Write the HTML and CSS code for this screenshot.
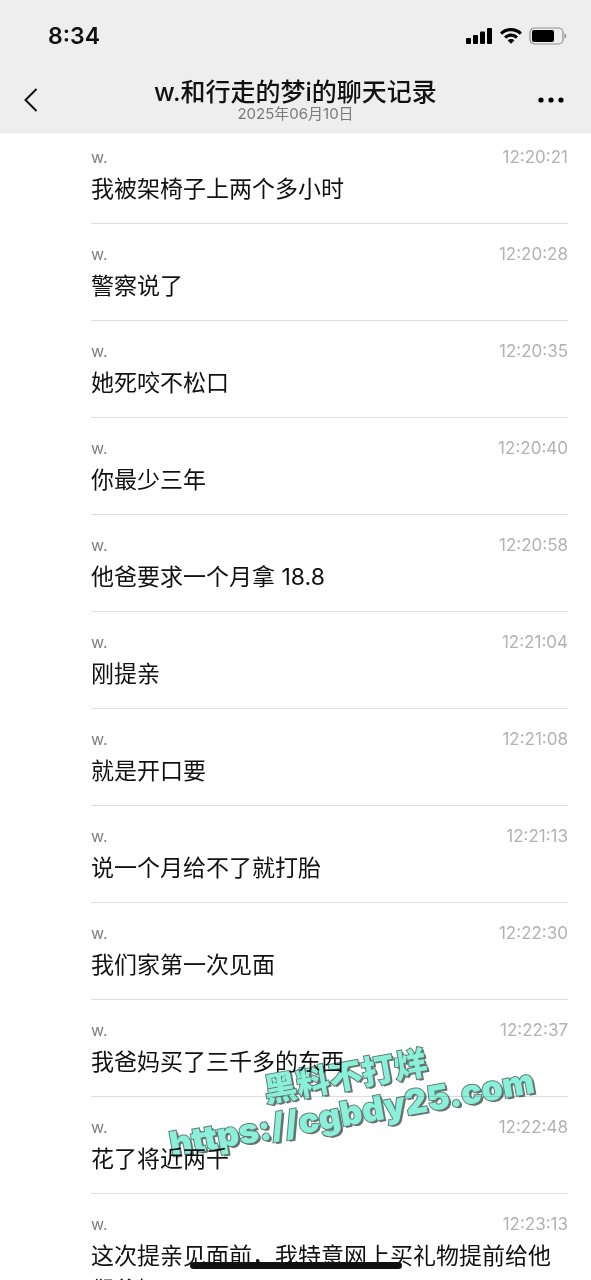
FILE: index.html
```html
<!DOCTYPE html>
<html lang="zh-CN">
<head>
<meta charset="utf-8">
<meta name="viewport" content="width=device-width, initial-scale=1">
<title>w.和行走的梦i的聊天记录</title>
<link rel="stylesheet" href="styles.css">
</head>
<body>
<div class="screen">
  <header class="top">
    <div class="status">
      <span class="clock">8:34</span>
      <div class="indicators">
        <svg width="28" height="18" viewBox="0 0 28 18" aria-hidden="true"><rect x="1" y="11" width="5" height="6" rx="1"/><rect x="8" y="8" width="5" height="9" rx="1"/><rect x="15" y="4.500" width="5" height="12.500" rx="1"/><rect x="22" y="1" width="5" height="16" rx="1"/></svg>
        <svg width="24" height="18" viewBox="0 0 24 18" aria-hidden="true"><path d="M12 1C7.700 1 3.800 2.700 1 5.400L3.200 7.700C5.500 5.500 8.600 4.200 12 4.200s6.500 1.300 8.800 3.500L23 5.400C20.200 2.700 16.300 1 12 1Z"/><path d="M12 6.600c-2.700 0-5.200 1.100-7 2.800l2.300 2.300C8.500 10.500 10.200 9.800 12 9.800s3.500.7 4.700 1.900L19 9.400c-1.800-1.700-4.300-2.800-7-2.800Z"/><path d="M12 12c-1.300 0-2.500.5-3.300 1.400L12 16.800l3.300-3.400C14.500 12.500 13.300 12 12 12Z"/></svg>
        <svg width="38" height="18" viewBox="0 0 38 18" aria-hidden="true"><rect x="1" y="1" width="33" height="16" rx="4.500" fill="none" stroke="#8e8e8e" stroke-width="1.200"/><rect x="3" y="3" width="22" height="12" rx="2"/><path d="M35.500 6.300c1 .4 1.700 1.400 1.700 2.700s-.7 2.300-1.700 2.700Z" fill="#8e8e8e"/></svg>
      </div>
    </div>
    <nav class="nav">
      <button class="icon-button" type="button" aria-label="返回"><svg width="18" height="26" viewBox="0 0 18 26" aria-hidden="true"><path d="M14.500 2 3.500 13l11 11" fill="none" stroke="#111" stroke-width="2"/></svg></button>
      <div class="heading">
        <h1 class="title">w.和行走的梦i的聊天记录</h1>
        <time class="date" datetime="2025-06-10">2025年06月10日</time>
      </div>
      <button class="icon-button more" type="button" aria-label="更多"><svg width="28" height="8" viewBox="0 0 28 8" aria-hidden="true"><circle cx="4" cy="4" r="2.600"/><circle cx="14" cy="4" r="2.600"/><circle cx="24" cy="4" r="2.600"/></svg></button>
    </nav>
  </header>
  <main class="records">
    <article class="record"><div class="meta"><span class="name">w.</span><time class="time">12:20:21</time></div><p class="message">我被架椅子上两个多小时</p></article>
    <article class="record"><div class="meta"><span class="name">w.</span><time class="time">12:20:28</time></div><p class="message">警察说了</p></article>
    <article class="record"><div class="meta"><span class="name">w.</span><time class="time">12:20:35</time></div><p class="message">她死咬不松口</p></article>
    <article class="record"><div class="meta"><span class="name">w.</span><time class="time">12:20:40</time></div><p class="message">你最少三年</p></article>
    <article class="record"><div class="meta"><span class="name">w.</span><time class="time">12:20:58</time></div><p class="message">他爸要求一个月拿 18.8</p></article>
    <article class="record"><div class="meta"><span class="name">w.</span><time class="time">12:21:04</time></div><p class="message">刚提亲</p></article>
    <article class="record"><div class="meta"><span class="name">w.</span><time class="time">12:21:08</time></div><p class="message">就是开口要</p></article>
    <article class="record"><div class="meta"><span class="name">w.</span><time class="time">12:21:13</time></div><p class="message">说一个月给不了就打胎</p></article>
    <article class="record"><div class="meta"><span class="name">w.</span><time class="time">12:22:30</time></div><p class="message">我们家第一次见面</p></article>
    <article class="record"><div class="meta"><span class="name">w.</span><time class="time">12:22:37</time></div><p class="message">我爸妈买了三千多的东西</p></article>
    <article class="record"><div class="meta"><span class="name">w.</span><time class="time">12:22:48</time></div><p class="message">花了将近两千</p></article>
    <article class="record"><div class="meta"><span class="name">w.</span><time class="time">12:23:13</time></div><p class="message">这次提亲见面前，我特意网上买礼物提前给他们爸妈</p></article>
  </main>
  <div class="watermark"><span class="mark-name">黑料不打烊</span><span class="mark-url">https://cgbdy25.com</span></div>
  <div class="home-bar"></div>
</div>
</body>
</html>
```
FILE: styles.css
```css
* { box-sizing: border-box; }
body {
  margin: 0;
  background: #fff;
  color: #111;
  font-family: Inter, "Noto Sans CJK SC", sans-serif;
}
.screen {
  position: relative;
  height: 100vh;
  overflow: hidden;
  display: flex;
  flex-direction: column;
}
.top {
  flex: none;
  background: #eee;
  border-bottom: 1px solid #e9e9e9;
}
.status {
  display: flex;
  align-items: center;
  justify-content: space-between;
  height: 72px;
  padding: 0 24px 0 48px;
}
.clock { font-size: 23px; font-weight: 600; line-height: 28px; }
.indicators { display: flex; gap: 6px; }
.indicators svg { display: block; }
.nav {
  display: grid;
  grid-template-columns: 48px 1fr 48px;
  align-items: center;
  height: 60px;
  padding: 0 18px 4px;
}
.icon-button {
  display: flex;
  padding: 4px;
  border: 0;
  background: none;
}
.more { justify-self: end; padding: 8px; }
.heading { display: flex; flex-direction: column; align-items: center; }
.title { margin: 0; font-size: 25px; font-weight: 500; line-height: 28px; white-space: nowrap; }
.date { font-size: 15px; line-height: 16px; color: #7a7a7a; white-space: nowrap; }
.records { padding: 0 23px 0 91px; }
.record {
  min-height: 97px;
  padding: 20px 0 16px;
  border-bottom: 1px solid #dedede;
}
.record:first-child { min-height: 91px; padding-top: 14px; }
.meta {
  display: flex;
  align-items: center;
  justify-content: space-between;
  line-height: 20px;
}
.name { font-size: 16px; color: #7f7f7f; }
.time { font-size: 17px; color: #b2b2b2; }
.message { margin: 5px 0 0; font-size: 23px; line-height: 34px; }
.watermark {
  position: absolute;
  left: 164px;
  top: 1058px;
  display: flex;
  flex-direction: column;
  align-items: center;
  color: #8af0da;
  font-weight: 900;
  white-space: nowrap;
  transform: rotate(-10deg);
  mix-blend-mode: multiply;
  -webkit-text-stroke: 2px #5c7d77;
  paint-order: stroke fill;
  text-shadow: 2px 2px 0 #66736f;
}
.mark-name { font-size: 33px; line-height: 36px; }
.mark-url { font-size: 34px; line-height: 38px; }
.home-bar {
  position: absolute;
  left: 50%;
  bottom: 11px;
  width: 212px;
  height: 7px;
  margin-left: -106px;
  border-radius: 4px;
  background: #111;
}
```
